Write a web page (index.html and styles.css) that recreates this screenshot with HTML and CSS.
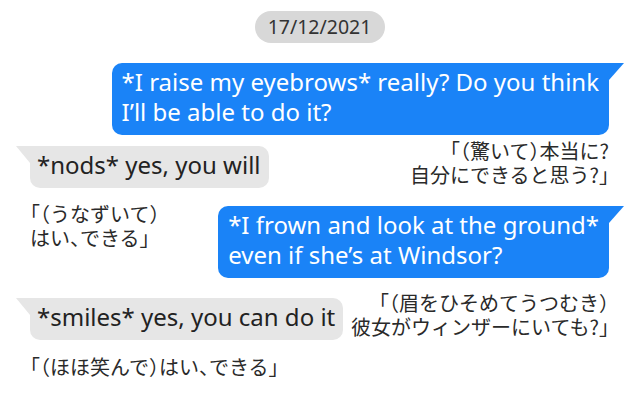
FILE: index.html
```html
<!DOCTYPE html>
<html>
<head>
    <meta charset="UTF-8">
    <meta name="viewport" content="width=device-width, initial-scale=1.0">
    <title>Chat</title>
    <link rel="stylesheet" href="styles.css">
</head>
<body>
    <div class="chat">
        <div class="chat__date">17/12/2021</div>

        <div class="chat__row chat__row--end chat__row--first">
            <div class="bubble bubble--me">*I raise my eyebrows* really? Do you think<br>I’ll be able to do it?</div>
        </div>

        <div class="chat__row chat__row--second">
            <div class="bubble bubble--them">*nods* yes, you will</div>
            <div class="trans trans--end">「（驚いて）本当に?<br>自分にできると思う?」</div>
        </div>

        <div class="chat__row chat__row--third">
            <div class="trans">「（うなずいて）<br>はい、できる」</div>
            <div class="bubble bubble--me">*I frown and look at the ground*<br>even if she’s at Windsor?</div>
        </div>

        <div class="chat__row chat__row--fourth">
            <div class="bubble bubble--them">*smiles* yes, you can do it</div>
            <div class="trans trans--end">「（眉をひそめてうつむき）<br>彼女がウィンザーにいても?」</div>
        </div>

        <div class="chat__row chat__row--fifth">
            <div class="trans">「（ほほ笑んで）はい、できる」</div>
        </div>
    </div>
</body>
</html>
```
FILE: styles.css
```css
*, *::before, *::after {
    box-sizing: border-box;
}
body {
    margin: 0;
    background: #fff;
    font-family: 'Noto Sans', sans-serif;
}
.chat {
    width: 640px;
    height: 406px;
    padding: 11px 31px 0 30px;
}
.chat__date {
    width: 130px;
    height: 32px;
    margin: 0 auto;
    border-radius: 16px;
    background-color: #d8d8d8;
    color: #333;
    font-size: 19.5px;
    line-height: 32px;
    text-align: center;
}
.chat__row {
    display: flex;
    justify-content: space-between;
    align-items: flex-start;
}
.chat__row--end {
    justify-content: flex-end;
}
.chat__row--first {
    margin-top: 20px;
}
.chat__row--second {
    margin-top: 4px;
}
.chat__row--third {
    margin-top: 14px;
}
.chat__row--fourth {
    margin-top: 13px;
}
.chat__row--fifth {
    margin-top: 15px;
}
.bubble {
    position: relative;
    border-radius: 10px;
    font-size: 24px;
    line-height: 30px;
    white-space: nowrap;
}
.bubble--me {
    padding: 4px 10px 8px 10px;
    background-color: #1a83f7;
    color: #fff;
    border-top-right-radius: 0;
}
.bubble--me::after {
    content: "";
    position: absolute;
    top: 0;
    right: -15px;
    width: 0;
    height: 0;
    border-top: 17px solid #1a83f7;
    border-right: 15px solid transparent;
}
.chat__row--third .bubble--me {
    margin-top: 4px;
}
.bubble--them {
    margin-top: 7px;
    padding: 4px 8px 8px 7px;
    background-color: #e6e6e6;
    color: #222;
    border-top-left-radius: 0;
}
.bubble--them::before {
    content: "";
    position: absolute;
    top: 0;
    left: -14px;
    width: 0;
    height: 0;
    border-top: 17px solid #e6e6e6;
    border-left: 14px solid transparent;
}
.trans {
    font-family: 'Noto Sans CJK JP', sans-serif;
    font-feature-settings: "halt";
    font-size: 20px;
    line-height: 24px;
    color: #2a2a2a;
    white-space: nowrap;
}
.trans--end {
    text-align: right;
}
```
